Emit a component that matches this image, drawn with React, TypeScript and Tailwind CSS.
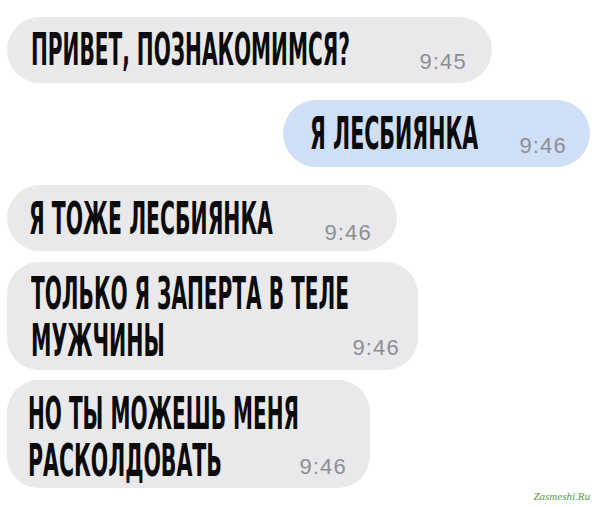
import React, { useLayoutEffect, useRef, useState } from "react";

function Line({ text, w, className }: { text: string; w: number; className: string }) {
  const ref = useRef<HTMLSpanElement>(null);
  const [s, setS] = useState(1);
  useLayoutEffect(() => {
    if (ref.current) {
      const nat = ref.current.offsetWidth;
      if (nat > 0) setS(w / nat);
    }
  }, [w]);
  return (
    <span className={"block whitespace-nowrap " + className}>
      <span
        ref={ref}
        className="inline-block origin-left"
        style={{ transform: `scaleX(${s})` }}
      >
        {text}
      </span>
    </span>
  );
}

const textFont =
  "font-['Liberation_Sans_Narrow','DejaVu_Sans_Condensed','Roboto',sans-serif] font-bold text-[45px] leading-[47px] text-[#0b0b0b]";
const timeFont =
  "font-['Liberation_Sans','Arial',sans-serif] text-[22px] leading-[22px] tracking-[1.2px] text-[#8e8e93]";

export default function App() {
  return (
    <div className="w-[600px] h-[507px] bg-white flex flex-col pl-[7px] pr-[10px] pt-[17px] overflow-hidden">
      {/* 1 */}
      <div className="w-[485px] h-[66px] rounded-full bg-[#e9e9eb] flex items-start pl-[24px] pt-[9px]">
        <div className={textFont}>
          <Line text="ПРИВЕТ, ПОЗНАКОМИМСЯ?" w={319} className="w-[319px]" />
        </div>
        <span className={timeFont + " ml-auto mr-[25px] mt-[25px]"}>9:45</span>
      </div>

      {/* 2 */}
      <div className="self-end w-[307px] h-[67px] rounded-full bg-[#cfdff6] flex items-start pl-[27px] pt-[10px] mt-[17px]">
        <div className={textFont}>
          <Line text="Я ЛЕСБИЯНКА" w={168} className="w-[168px]" />
        </div>
        <span className={timeFont + " ml-auto mr-[23px] mt-[25px]"}>9:46</span>
      </div>

      {/* 3 */}
      <div className="w-[390px] h-[66px] rounded-full bg-[#e9e9eb] flex items-start pl-[22px] pt-[10px] mt-[18px]">
        <div className={textFont}>
          <Line text="Я ТОЖЕ ЛЕСБИЯНКА" w={244} className="w-[244px]" />
        </div>
        <span className={timeFont + " ml-auto mr-[25px] mt-[27px]"}>9:46</span>
      </div>

      {/* 4 */}
      <div className="w-[411px] h-[108px] rounded-[32px] bg-[#e9e9eb] flex items-start pl-[24px] pt-[8px] mt-[11px]">
        <div className={textFont}>
          <Line text="ТОЛЬКО Я ЗАПЕРТА В ТЕЛЕ" w={318} className="w-[318px]" />
          <Line text="МУЖЧИНЫ" w={134} className="w-[134px]" />
        </div>
        <span className={timeFont + " ml-auto mr-[18px] mt-[67px]"}>9:46</span>
      </div>

      {/* 5 */}
      <div className="w-[363px] h-[108px] rounded-[32px] bg-[#e9e9eb] flex items-start pl-[21px] pt-[10px] mt-[10px]">
        <div className={textFont}>
          <Line text="НО ТЫ МОЖЕШЬ МЕНЯ" w={271} className="w-[271px]" />
          <Line text="РАСКОЛДОВАТЬ" w={194} className="w-[194px]" />
        </div>
        <span className={timeFont + " ml-auto mr-[23px] mt-[66px]"}>9:46</span>
      </div>

      <div className="flex justify-end mt-[2px]">
        <span className="font-['Liberation_Serif',serif] italic text-[11px] leading-[12px] text-[#4f9a3f]">
          Zasmeshi.Ru
        </span>
      </div>
    </div>
  );
}
